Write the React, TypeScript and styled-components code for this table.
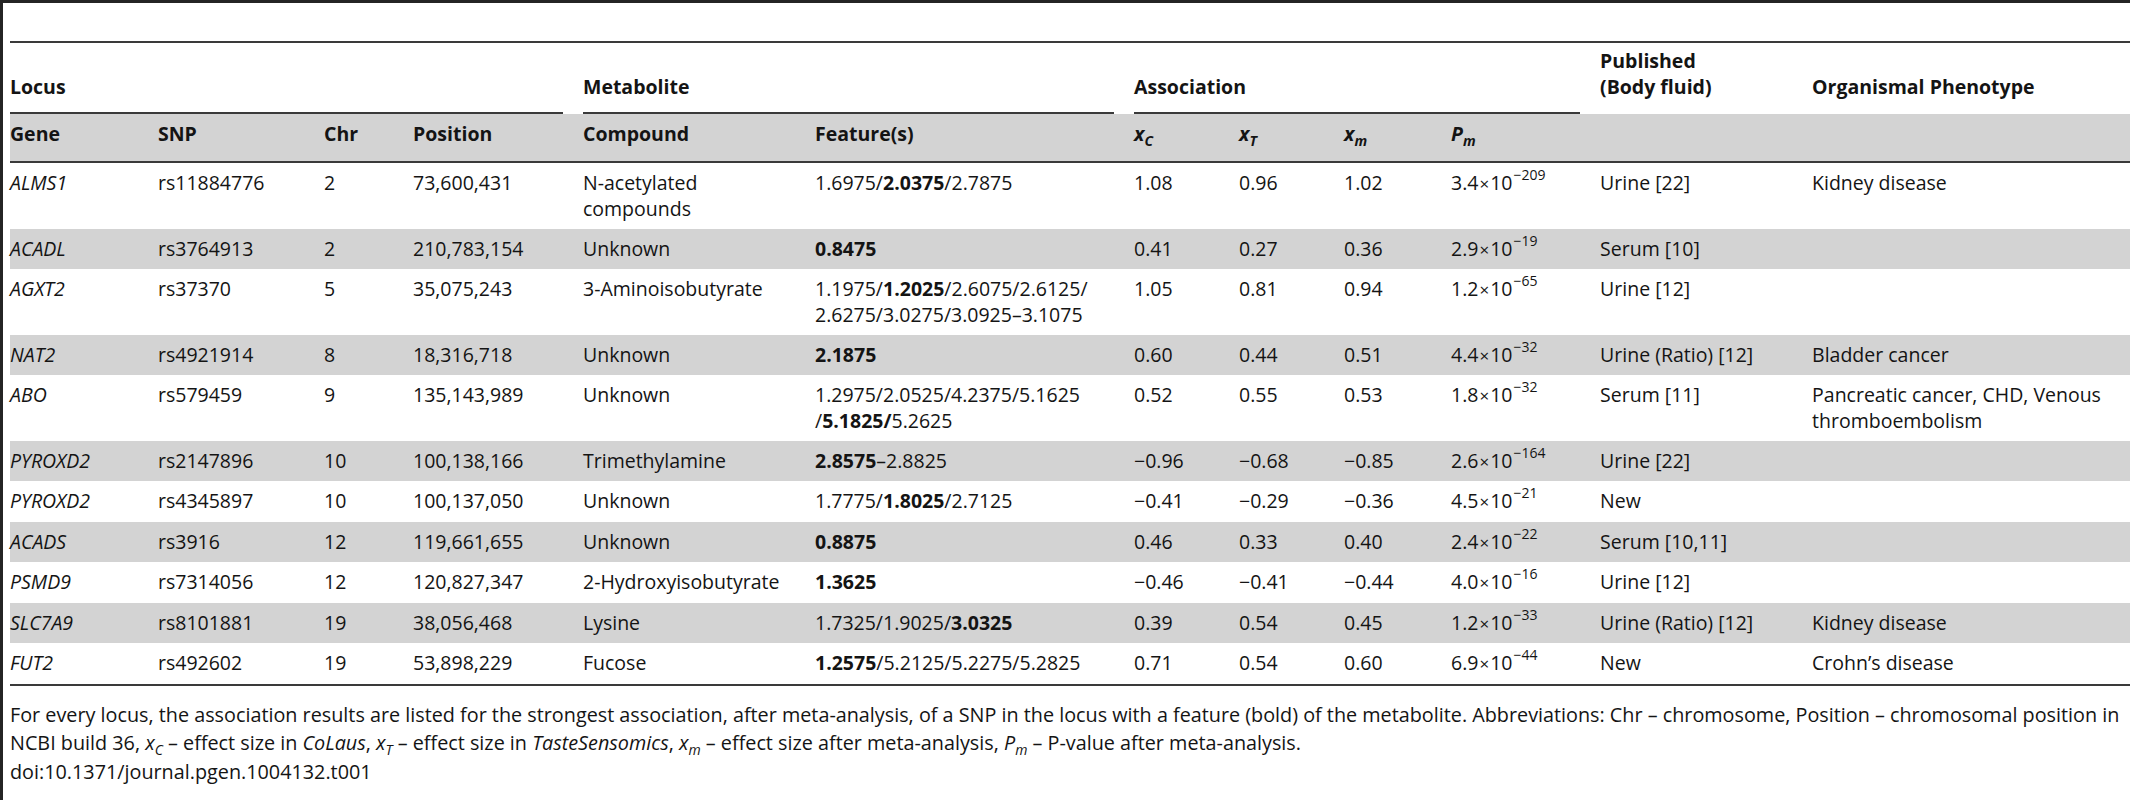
import React from "react";
import styled, { createGlobalStyle } from "styled-components";

const GlobalStyle = createGlobalStyle`
  html, body { margin: 0; padding: 0; background: #fff; }
  body {
    font-family: "Open Sans", "Noto Sans", sans-serif;
    color: #141414;
    font-size: 19.5px;
  }
  * { box-sizing: border-box; }
`;

const Frame = styled.div`
  width: 2130px;
  min-height: 800px;
  border-top: 3px solid #242424;
  border-left: 3px solid #242424;
  padding-left: 7px;
  overflow: hidden;
`;

const TitleArea = styled.div`
  height: 40px;
  border-bottom: 2px solid #3a3a3a;
`;

const Table = styled.table`
  table-layout: fixed;
  width: 2120px;
  border-collapse: separate;
  border-spacing: 0;
  line-height: 26px;
`;

const GroupCell = styled.th`
  text-align: left;
  vertical-align: bottom;
  font-weight: 700;
  padding: 0;
  height: 71px;
`;

const GroupLabel = styled.div<{ $rule?: boolean }>`
  margin-right: 20px;
  padding-bottom: 12px;
  border-bottom: 2px solid ${(p) => (p.$rule ? "#3a3a3a" : "transparent")};
`;

const HeadCell = styled.th`
  text-align: left;
  vertical-align: top;
  font-weight: 700;
  background: #d3d3d3;
  padding: 7px 20px 13px 0;
  border-bottom: 2px solid #3a3a3a;
  height: 49px;
`;

const Row = styled.tr<{ $shaded: boolean }>`
  background: ${(p) => (p.$shaded ? "#d3d3d3" : "#fff")};
`;

const Cell = styled.td<{ $last?: boolean }>`
  vertical-align: top;
  padding: 7px 20px 6.5px 0;
  white-space: nowrap;
  border-bottom: ${(p) => (p.$last ? "2px solid #3a3a3a" : "none")};
`;

const GeneName = styled.i`
  font-style: italic;
`;

const Bold = styled.b`
  font-weight: 700;
`;

const Sup = styled.sup`
  font-size: 14px;
  line-height: 0;
  vertical-align: 10px;
  margin-left: 1px;
`;

const Sub = styled.sub`
  font-size: 14px;
  line-height: 0;
  vertical-align: -5px;
`;

const Times = styled.span`
  font-size: 17px;
  margin: 0 1px;
`;

const Footnote = styled.div`
  padding-top: 15px;
  font-size: 19.8px;
  line-height: 28.5px;
  white-space: nowrap;
`;

const widths = [148, 166, 89, 170, 232, 319, 105, 105, 107, 149, 212, 318];

type RowData = {
  gene: string;
  snp: string;
  chr: string;
  pos: string;
  compound: string;
  feature: string;
  xc: string;
  xt: string;
  xm: string;
  p: [string, string];
  pub: string;
  pheno: string;
};

const rows: RowData[] = [
  { gene: "ALMS1", snp: "rs11884776", chr: "2", pos: "73,600,431", compound: "N-acetylated\ncompounds", feature: "1.6975/**2.0375**/2.7875", xc: "1.08", xt: "0.96", xm: "1.02", p: ["3.4", "−209"], pub: "Urine [22]", pheno: "Kidney disease" },
  { gene: "ACADL", snp: "rs3764913", chr: "2", pos: "210,783,154", compound: "Unknown", feature: "**0.8475**", xc: "0.41", xt: "0.27", xm: "0.36", p: ["2.9", "−19"], pub: "Serum [10]", pheno: "" },
  { gene: "AGXT2", snp: "rs37370", chr: "5", pos: "35,075,243", compound: "3-Aminoisobutyrate", feature: "1.1975/**1.2025**/2.6075/2.6125/\n2.6275/3.0275/3.0925–3.1075", xc: "1.05", xt: "0.81", xm: "0.94", p: ["1.2", "−65"], pub: "Urine [12]", pheno: "" },
  { gene: "NAT2", snp: "rs4921914", chr: "8", pos: "18,316,718", compound: "Unknown", feature: "**2.1875**", xc: "0.60", xt: "0.44", xm: "0.51", p: ["4.4", "−32"], pub: "Urine (Ratio) [12]", pheno: "Bladder cancer" },
  { gene: "ABO", snp: "rs579459", chr: "9", pos: "135,143,989", compound: "Unknown", feature: "1.2975/2.0525/4.2375/5.1625\n/**5.1825/**5.2625", xc: "0.52", xt: "0.55", xm: "0.53", p: ["1.8", "−32"], pub: "Serum [11]", pheno: "Pancreatic cancer, CHD, Venous\nthromboembolism" },
  { gene: "PYROXD2", snp: "rs2147896", chr: "10", pos: "100,138,166", compound: "Trimethylamine", feature: "**2.8575**–2.8825", xc: "−0.96", xt: "−0.68", xm: "−0.85", p: ["2.6", "−164"], pub: "Urine [22]", pheno: "" },
  { gene: "PYROXD2", snp: "rs4345897", chr: "10", pos: "100,137,050", compound: "Unknown", feature: "1.7775/**1.8025**/2.7125", xc: "−0.41", xt: "−0.29", xm: "−0.36", p: ["4.5", "−21"], pub: "New", pheno: "" },
  { gene: "ACADS", snp: "rs3916", chr: "12", pos: "119,661,655", compound: "Unknown", feature: "**0.8875**", xc: "0.46", xt: "0.33", xm: "0.40", p: ["2.4", "−22"], pub: "Serum [10,11]", pheno: "" },
  { gene: "PSMD9", snp: "rs7314056", chr: "12", pos: "120,827,347", compound: "2-Hydroxyisobutyrate", feature: "**1.3625**", xc: "−0.46", xt: "−0.41", xm: "−0.44", p: ["4.0", "−16"], pub: "Urine [12]", pheno: "" },
  { gene: "SLC7A9", snp: "rs8101881", chr: "19", pos: "38,056,468", compound: "Lysine", feature: "1.7325/1.9025/**3.0325**", xc: "0.39", xt: "0.54", xm: "0.45", p: ["1.2", "−33"], pub: "Urine (Ratio) [12]", pheno: "Kidney disease" },
  { gene: "FUT2", snp: "rs492602", chr: "19", pos: "53,898,229", compound: "Fucose", feature: "**1.2575**/5.2125/5.2275/5.2825", xc: "0.71", xt: "0.54", xm: "0.60", p: ["6.9", "−44"], pub: "New", pheno: "Crohn’s disease" },
];

function Multi({ text }: { text: string }) {
  const lines = text.split("\n");
  return (
    <>
      {lines.map((line, i) => (
        <React.Fragment key={i}>
          {i > 0 && <br />}
          {line.split("**").map((seg, j) =>
            j % 2 === 1 ? <Bold key={j}>{seg}</Bold> : <React.Fragment key={j}>{seg}</React.Fragment>
          )}
        </React.Fragment>
      ))}
    </>
  );
}

function PValue({ p }: { p: [string, string] }) {
  return (
    <>
      {p[0]}
      <Times>×</Times>10<Sup>{p[1]}</Sup>
    </>
  );
}

function Sym({ base, sub }: { base: string; sub: string }) {
  return (
    <i>
      {base}
      <Sub>{sub}</Sub>
    </i>
  );
}

export default function App() {
  return (
    <>
      <GlobalStyle />
      <Frame>
        <TitleArea />
        <Table>
          <colgroup>
            {widths.map((w, i) => (
              <col key={i} style={{ width: w }} />
            ))}
          </colgroup>
          <thead>
            <tr>
              <GroupCell colSpan={4}>
                <GroupLabel $rule>Locus</GroupLabel>
              </GroupCell>
              <GroupCell colSpan={2}>
                <GroupLabel $rule>Metabolite</GroupLabel>
              </GroupCell>
              <GroupCell colSpan={4}>
                <GroupLabel $rule>Association</GroupLabel>
              </GroupCell>
              <GroupCell>
                <GroupLabel>
                  Published
                  <br />
                  (Body fluid)
                </GroupLabel>
              </GroupCell>
              <GroupCell>
                <GroupLabel>Organismal Phenotype</GroupLabel>
              </GroupCell>
            </tr>
            <tr>
              <HeadCell>Gene</HeadCell>
              <HeadCell>SNP</HeadCell>
              <HeadCell>Chr</HeadCell>
              <HeadCell>Position</HeadCell>
              <HeadCell>Compound</HeadCell>
              <HeadCell>Feature(s)</HeadCell>
              <HeadCell>
                <Sym base="x" sub="C" />
              </HeadCell>
              <HeadCell>
                <Sym base="x" sub="T" />
              </HeadCell>
              <HeadCell>
                <Sym base="x" sub="m" />
              </HeadCell>
              <HeadCell>
                <Sym base="P" sub="m" />
              </HeadCell>
              <HeadCell />
              <HeadCell />
            </tr>
          </thead>
          <tbody>
            {rows.map((r, i) => {
              const last = i === rows.length - 1;
              return (
                <Row key={i} $shaded={i % 2 === 1}>
                  <Cell $last={last}>
                    <GeneName>{r.gene}</GeneName>
                  </Cell>
                  <Cell $last={last}>{r.snp}</Cell>
                  <Cell $last={last}>{r.chr}</Cell>
                  <Cell $last={last}>{r.pos}</Cell>
                  <Cell $last={last}>
                    <Multi text={r.compound} />
                  </Cell>
                  <Cell $last={last}>
                    <Multi text={r.feature} />
                  </Cell>
                  <Cell $last={last}>{r.xc}</Cell>
                  <Cell $last={last}>{r.xt}</Cell>
                  <Cell $last={last}>{r.xm}</Cell>
                  <Cell $last={last}>
                    <PValue p={r.p} />
                  </Cell>
                  <Cell $last={last}>{r.pub}</Cell>
                  <Cell $last={last}>
                    <Multi text={r.pheno} />
                  </Cell>
                </Row>
              );
            })}
          </tbody>
        </Table>
        <Footnote>
          For every locus, the association results are listed for the strongest association, after meta-analysis, of a SNP in the locus with a feature (bold) of the metabolite. Abbreviations: Chr – chromosome, Position – chromosomal position in
          <br />
          NCBI build 36, <Sym base="x" sub="C" /> – effect size in <i>CoLaus</i>, <Sym base="x" sub="T" /> – effect size in <i>TasteSensomics</i>, <Sym base="x" sub="m" /> – effect size after meta-analysis, <Sym base="P" sub="m" /> – P-value after meta-analysis.
          <br />
          doi:10.1371/journal.pgen.1004132.t001
        </Footnote>
      </Frame>
    </>
  );
}
